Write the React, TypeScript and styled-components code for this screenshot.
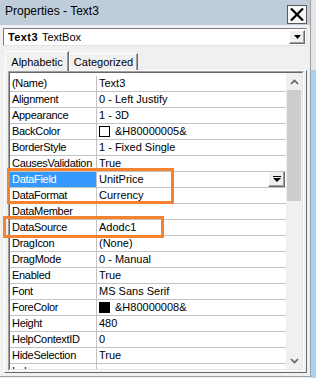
import React from "react";
import styled, { createGlobalStyle } from "styled-components";

const GlobalStyle = createGlobalStyle`
  html, body { margin: 0; padding: 0; background: #f0f0f0; }
  body {
    width: 316px; height: 378px; overflow: hidden;
    font-family: "Liberation Sans", Arial, sans-serif;
    color: #000;
  }
  * { box-sizing: border-box; }
`;

const Screen = styled.div`
  display: flex;
  width: 316px;
  height: 378px;
`;

const Window = styled.div`
  position: relative;
  width: 311px;
  height: 377px;
  background: #f0f0f0;
  border-right: 1px solid #a0a0a0;
  border-bottom: 1px solid #a0a0a0;
  display: flex;
  flex-direction: column;
  overflow: hidden;
`;

const EdgeStrip = styled.div`
  width: 5px;
  height: 378px;
  background: linear-gradient(#e6e6e6 0 70px, #a9d1f1 70px);
`;

const TitleBar = styled.div`
  height: 25px;
  flex: none;
  background: #bfcddb;
  display: flex;
  align-items: flex-start;
  justify-content: space-between;
  padding: 0 3px 0 5px;
`;

const Title = styled.div`
  font-size: 12px;
  line-height: 23px;
`;

const CloseButton = styled.div`
  margin-top: 5px;
  width: 20px;
  height: 19px;
  background: #f7f7f7;
  border: 1px solid #5a5a5a;
  display: flex;
  align-items: center;
  justify-content: center;
`;

const Combo = styled.div`
  margin: 3px 3px 0 3px;
  height: 18px;
  flex: none;
  background: #fff;
  border: 1px solid;
  border-color: #7a7a7a #e3e3e3 #e3e3e3 #7a7a7a;
  display: flex;
  align-items: center;
  padding-left: 4px;
  font-size: 11px;
`;

const ComboName = styled.span`
  font-weight: bold;
  letter-spacing: 0.4px;
  margin-right: 4px;
`;

const RaisedButton = styled.div<{ $w: number; $h: number }>`
  margin-left: auto;
  width: ${(p) => p.$w}px;
  height: ${(p) => p.$h}px;
  flex: none;
  background: #f0f0f0;
  border: 1px solid;
  border-color: #fff #696969 #696969 #fff;
  box-shadow: inset -1px -1px #a0a0a0;
  display: flex;
  align-items: center;
  justify-content: center;
`;

const ComboButton = styled(RaisedButton)`
  margin-right: 1px;
`;

const TabStrip = styled.div`
  margin-top: 5px;
  height: 20px;
  flex: none;
  display: flex;
  align-items: flex-end;
  padding-left: 5px;
  position: relative;
  z-index: 2;
`;

const Tab = styled.div<{ $active?: boolean; $w: number }>`
  width: ${(p) => p.$w}px;
  height: ${(p) => (p.$active ? 20 : 17)}px;
  margin-bottom: ${(p) => (p.$active ? 0 : 1)}px;
  background: #f0f0f0;
  border-top: 1px solid #fff;
  border-left: 1px solid #fff;
  border-right: 1px solid #696969;
  box-shadow: inset -1px 0 #a0a0a0;
  font-size: 11px;
  display: flex;
  justify-content: center;
  padding-top: ${(p) => (p.$active ? 4 : 2)}px;
`;

const TabPanel = styled.div`
  margin: -1px 3px 0 4px;
  border: 1px solid;
  border-color: #fff #696969 #696969 #fff;
  padding: 0 2px 1px 3px;
  flex: none;
  position: relative;
  z-index: 1;
`;

const GridFrame = styled.div`
  height: 300px;
  border: 1px solid;
  border-color: #a0a0a0 #fff #fff #a0a0a0;
`;

const GridInner = styled.div`
  height: 100%;
  border: 1px solid;
  border-color: #696969 #e3e3e3 #e3e3e3 #696969;
  background: #fff;
  display: flex;
  overflow: hidden;
`;

const Rows = styled.div`
  width: 276px;
  flex: none;
  padding-top: 3px;
  background: #fff;
`;

const Row = styled.div`
  height: 16px;
  display: grid;
  grid-template-columns: 87px 1fr;
  border-bottom: 1px solid #c3c3c3;
  font-size: 11px;
  line-height: 15px;
`;

const NameCell = styled.div<{ $selected?: boolean }>`
  padding-left: 2px;
  letter-spacing: -0.3px;
  border-right: 1px solid #c3c3c3;
  background: ${(p) => (p.$selected ? "#3399ff" : "#fff")};
  color: ${(p) => (p.$selected ? "#fff" : "#000")};
  white-space: nowrap;
  overflow: hidden;
`;

const ValueCell = styled.div`
  padding-left: 2px;
  display: flex;
  align-items: flex-start;
  white-space: nowrap;
  overflow: hidden;
`;

const Swatch = styled.span<{ $color: string }>`
  width: 11px;
  height: 11px;
  margin: 2px 5px 0 0;
  flex: none;
  background: ${(p) => p.$color};
  border: 1px solid #000;
`;

const ValueButton = styled(RaisedButton)`
  margin-right: 1px;
  margin-top: -1px;
`;

const ScrollBar = styled.div`
  width: 16px;
  flex: none;
  background: #f0f0f0;
  display: flex;
  flex-direction: column;
`;

const ScrollArrow = styled.div`
  height: 17px;
  flex: none;
  display: flex;
  align-items: center;
  justify-content: center;
`;

const Thumb = styled.div`
  height: 111px;
  width: 14px;
  margin-left: 1px;
  flex: none;
  background: #cdcdcd;
`;

const ScrollTrack = styled.div`
  flex: 1;
`;

const Highlight = styled.div<{ $x: number; $y: number; $w: number; $h: number }>`
  position: absolute;
  left: ${(p) => p.$x}px;
  top: ${(p) => p.$y}px;
  width: ${(p) => p.$w}px;
  height: ${(p) => p.$h}px;
  border: 3px solid #f5822e;
  z-index: 5;
  pointer-events: none;
`;

const SmallArrow = () => (
  <svg width="7" height="4" viewBox="0 0 7 4">
    <polygon points="0,0 7,0 3.5,4" fill="#000" />
  </svg>
);

const ValueArrow = () => (
  <svg width="8" height="6" viewBox="0 0 8 6">
    <rect x="0" y="0" width="8" height="1" fill="#000" />
    <polygon points="0,2 8,2 4,6" fill="#000" />
  </svg>
);

const Chevron = ({ up }: { up?: boolean }) => (
  <svg width="9" height="6" viewBox="0 0 9 6">
    <polyline
      points={up ? "1,5 4.5,1.5 8,5" : "1,1 4.5,4.5 8,1"}
      fill="none"
      stroke="#606060"
      strokeWidth="1.6"
    />
  </svg>
);

type Prop = { name: string; value: string; swatch?: string; selected?: boolean };

const props: Prop[] = [
  { name: "(Name)", value: "Text3" },
  { name: "Alignment", value: "0 - Left Justify" },
  { name: "Appearance", value: "1 - 3D" },
  { name: "BackColor", value: "&H80000005&", swatch: "#fff" },
  { name: "BorderStyle", value: "1 - Fixed Single" },
  { name: "CausesValidation", value: "True" },
  { name: "DataField", value: "UnitPrice", selected: true },
  { name: "DataFormat", value: "Currency" },
  { name: "DataMember", value: "" },
  { name: "DataSource", value: "Adodc1" },
  { name: "DragIcon", value: "(None)" },
  { name: "DragMode", value: "0 - Manual" },
  { name: "Enabled", value: "True" },
  { name: "Font", value: "MS Sans Serif" },
  { name: "ForeColor", value: "&H80000008&", swatch: "#000" },
  { name: "Height", value: "480" },
  { name: "HelpContextID", value: "0" },
  { name: "HideSelection", value: "True" },
  { name: "Index", value: "" },
];

export default function App() {
  return (
    <>
      <GlobalStyle />
      <Screen>
        <Window>
          <TitleBar>
            <Title>Properties - Text3</Title>
            <CloseButton>
              <svg width="14" height="13" viewBox="0 0 14 13">
                <line x1="1" y1="0.5" x2="13" y2="12.5" stroke="#000" strokeWidth="2.2" />
                <line x1="13" y1="0.5" x2="1" y2="12.5" stroke="#000" strokeWidth="2.2" />
              </svg>
            </CloseButton>
          </TitleBar>
          <Combo>
            <ComboName>Text3</ComboName>
            TextBox
            <ComboButton $w={16} $h={14}>
              <SmallArrow />
            </ComboButton>
          </Combo>
          <TabStrip>
            <Tab $active $w={64}>Alphabetic</Tab>
            <Tab $w={69}>Categorized</Tab>
          </TabStrip>
          <TabPanel>
            <GridFrame>
              <GridInner>
                <Rows>
                  {props.map((p) => (
                    <Row key={p.name}>
                      <NameCell $selected={p.selected}>{p.name}</NameCell>
                      <ValueCell>
                        {p.swatch && <Swatch $color={p.swatch} />}
                        {p.value}
                        {p.selected && (
                          <ValueButton $w={17} $h={16}>
                            <ValueArrow />
                          </ValueButton>
                        )}
                      </ValueCell>
                    </Row>
                  ))}
                </Rows>
                <ScrollBar>
                  <ScrollArrow>
                    <Chevron up />
                  </ScrollArrow>
                  <Thumb />
                  <ScrollTrack />
                  <ScrollArrow>
                    <Chevron />
                  </ScrollArrow>
                </ScrollBar>
              </GridInner>
            </GridFrame>
          </TabPanel>
          <Highlight $x={7} $y={168} $w={167} $h={36} />
          <Highlight $x={3} $y={216} $w={161} $h={22} />
        </Window>
        <EdgeStrip />
      </Screen>
    </>
  );
}
